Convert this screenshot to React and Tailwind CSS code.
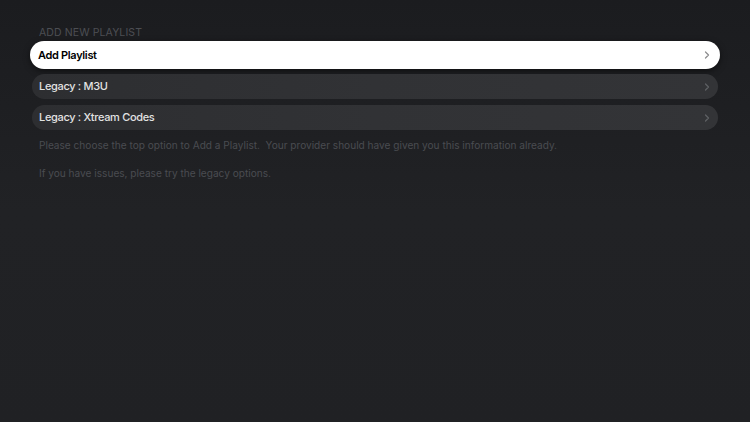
import { ChevronRight } from 'lucide-react'

const legacy = ['Legacy : M3U', 'Legacy : Xtream Codes']

export default function App() {
  return (
    <div
      className="w-[750px] h-[422px] overflow-hidden bg-gradient-to-b from-[#1b1c1f] via-[#212225] to-[#202124] text-[#e6e6e6]"
      style={{ fontFamily: 'Inter, "Noto Sans", sans-serif' }}
    >
      <div className="pt-[27px] px-[32px]">
        <h1 className="pl-[7px] text-[10.5px] leading-[12px] text-[#4c4e53] uppercase tracking-[0.01em]">
          Add new playlist
        </h1>

        <div className="mt-[2px] -mx-[2px] h-[28px] rounded-full bg-white flex items-center justify-between pl-[8px] pr-[7px] shadow-[0_2px_6px_rgba(0,0,0,0.5)]">
          <span className="text-[11px] font-semibold tracking-[-0.03em] text-black">Add Playlist</span>
          <ChevronRight className="w-[12px] h-[12px] text-[#8d8d8f]" strokeWidth={2.5} />
        </div>

        <div className="mt-[5px] flex flex-col gap-[6px]">
          {legacy.map((label) => (
            <div
              key={label}
              className="h-[25px] rounded-full bg-gradient-to-r from-[#2d2e31] via-[#313235] to-[#333437] flex items-center justify-between pl-[7px] pr-[5px]"
            >
              <span className="text-[11px] font-medium tracking-[-0.03em] text-[#e2e2e2]">{label}</span>
              <ChevronRight className="w-[12px] h-[12px] text-[#5f6064]" strokeWidth={2.5} />
            </div>
          ))}
        </div>

        <div className="pl-[7px] mt-[9px] text-[10.1px] leading-[12px] text-[#4a4c51]">
          <p>Please choose the top option to Add a Playlist.&nbsp; Your provider should have given you this information already.</p>
          <p className="mt-[16px]">If you have issues, please try the legacy options.</p>
        </div>
      </div>
    </div>
  )
}
